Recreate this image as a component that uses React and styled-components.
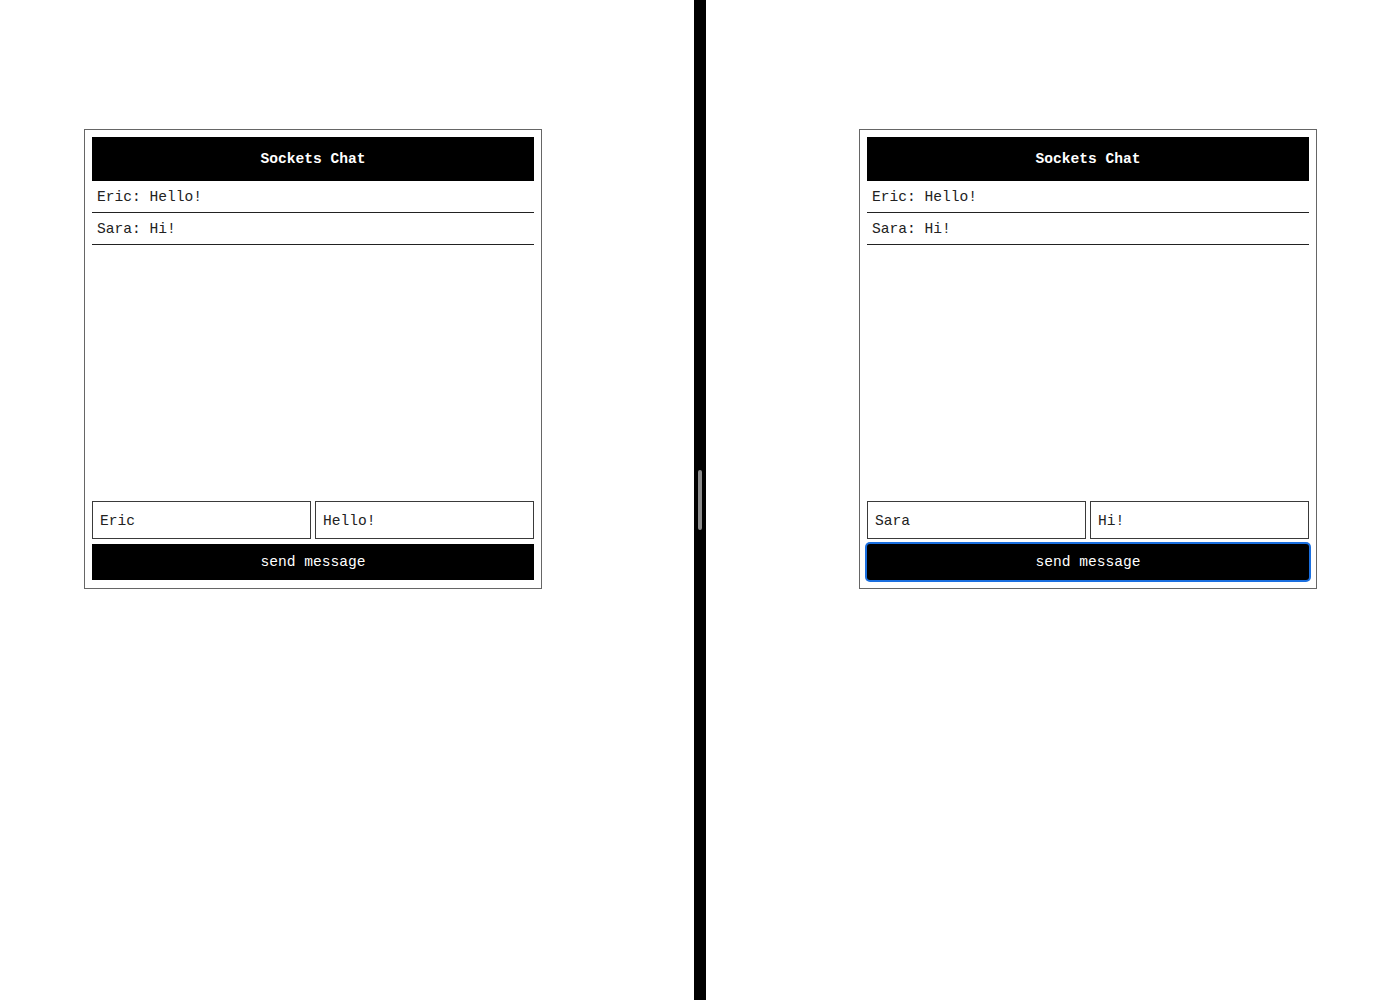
import React from "react";
import styled, { createGlobalStyle, css } from "styled-components";

const Global = createGlobalStyle`
  html, body { margin: 0; padding: 0; background: #fff; }
  body { font-family: "Liberation Mono", "DejaVu Sans Mono", monospace; }
  * { box-sizing: border-box; }
`;

const Split = styled.div`
  display: flex;
  width: 1400px;
  height: 1000px;
`;

const Pane = styled.div`
  width: 694px;
  flex: none;
  display: flex;
  align-items: flex-start;
  justify-content: ${(p) => (p.$side === "right" ? "flex-end" : "flex-start")};
  padding: 129px ${(p) => (p.$side === "right" ? "83px" : "0")} 0
    ${(p) => (p.$side === "right" ? "0" : "84px")};
`;

const Divider = styled.div`
  width: 12px;
  flex: none;
  background: #000;
  display: flex;
  align-items: center;
  justify-content: center;
`;

const Handle = styled.div`
  width: 4px;
  height: 60px;
  border-radius: 2px;
  background: #8a8a8a;
`;

const Panel = styled.div`
  width: 458px;
  height: 460px;
  border: 1px solid #666;
  padding: 7px 7px 8px;
  display: flex;
  flex-direction: column;
`;

const Header = styled.div`
  height: 44px;
  flex: none;
  background: #000;
  color: #fff;
  font-weight: bold;
  font-size: 14.6px;
  display: flex;
  align-items: center;
  justify-content: center;
`;

const Messages = styled.ul`
  list-style: none;
  margin: 0 0 4px;
  padding: 0;
  flex: 1;
`;

const Message = styled.li`
  height: 32px;
  border-bottom: 1px solid #222;
  padding: 1px 0 0 5px;
  font-size: 14.6px;
  color: #222;
  display: flex;
  align-items: center;
`;

const Form = styled.form`
  display: flex;
  flex-direction: column;
  gap: 5px;
  margin: 0;
`;

const Fields = styled.div`
  display: grid;
  grid-template-columns: 1fr 1fr;
  gap: 4px;
`;

const Input = styled.input`
  height: 38px;
  width: 100%;
  border: 1px solid #3a3a3a;
  padding: 2px 7px 0;
  font-family: "Liberation Mono", monospace;
  font-size: 14.6px;
  color: #222;
  outline: none;
  background: #fff;
`;

const Button = styled.button`
  height: 36px;
  width: 100%;
  border: none;
  background: #000;
  color: #fff;
  font-family: "Liberation Mono", monospace;
  font-size: 14.6px;
  cursor: pointer;
  ${(p) =>
    p.$focused &&
    css`
      border-radius: 3px;
      box-shadow: 0 0 0 2px #1a6fe0;
    `}
`;

const messages = [
  { name: "Eric", text: "Hello!" },
  { name: "Sara", text: "Hi!" },
];

function Chat({ name, draft, focused }) {
  return (
    <Panel>
      <Header>Sockets Chat</Header>
      <Messages>
        {messages.map((m, i) => (
          <Message key={i}>
            {m.name}: {m.text}
          </Message>
        ))}
      </Messages>
      <Form onSubmit={(e) => e.preventDefault()}>
        <Fields>
          <Input defaultValue={name} />
          <Input defaultValue={draft} />
        </Fields>
        <Button type="submit" $focused={focused}>
          send message
        </Button>
      </Form>
    </Panel>
  );
}

export default function App() {
  return (
    <>
      <Global />
      <Split>
        <Pane $side="left">
          <Chat name="Eric" draft="Hello!" />
        </Pane>
        <Divider>
          <Handle />
        </Divider>
        <Pane $side="right">
          <Chat name="Sara" draft="Hi!" focused />
        </Pane>
      </Split>
    </>
  );
}
